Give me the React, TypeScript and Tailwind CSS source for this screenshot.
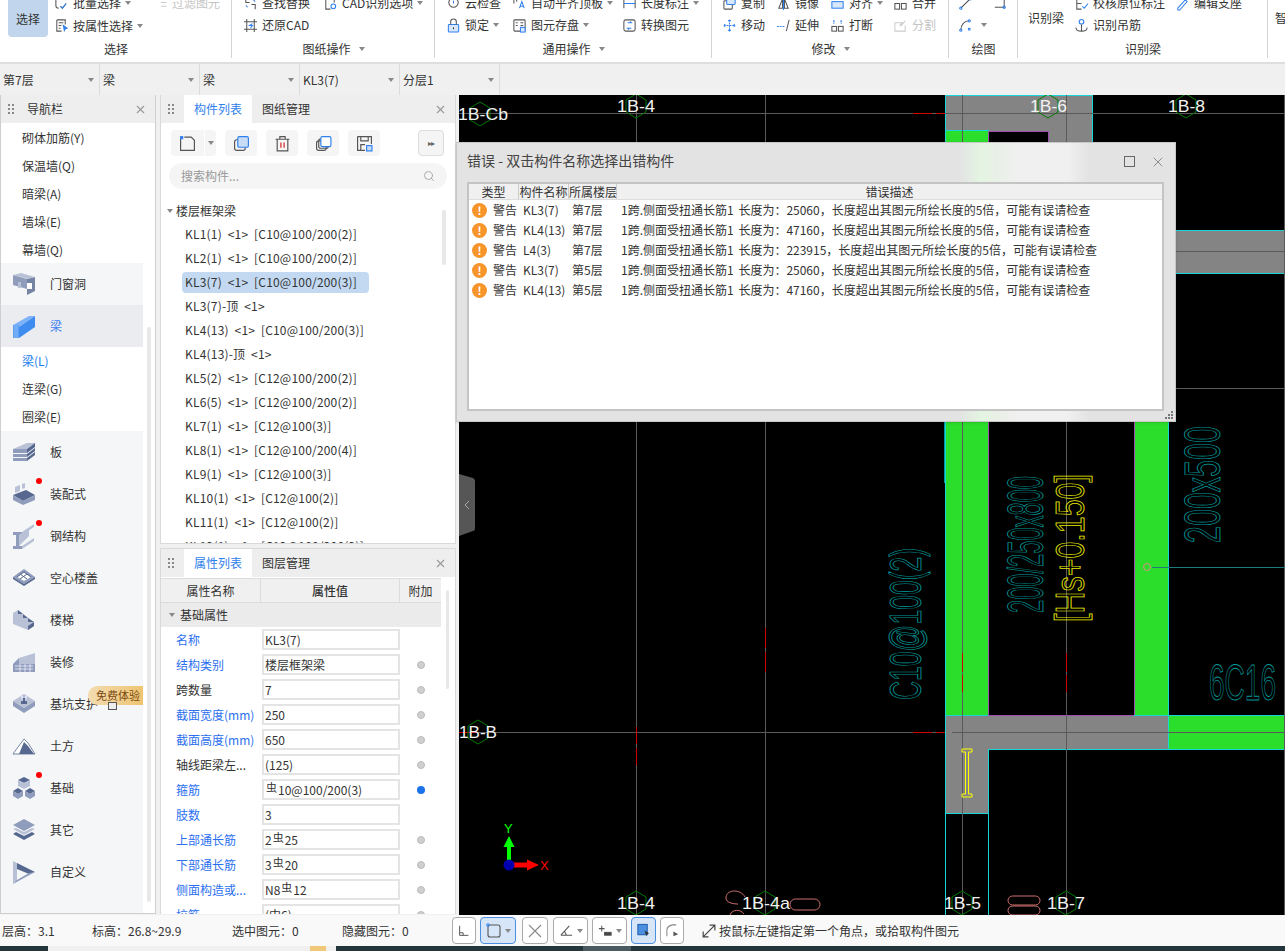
import React from "react";
import { X, Search } from "lucide-react";

/* ─── Small shared bits ───────────────────────────────── */

const Caret = ({ className = "ml-1" }: { className?: string }) => (
  <span className={`inline-block border-x-[3px] border-t-[4px] border-x-transparent border-t-[#888] ${className}`} />
);

const Grip = () => (
  <span className="grid grid-cols-2 gap-x-[2px] gap-y-[2px] w-[6px]">
    {[0, 1, 2, 3, 4, 5].map((i) => (
      <span key={i} className="w-[2px] h-[2px] bg-[#888]" />
    ))}
  </span>
);

const Svg = ({ children, size = 15 }: { children: React.ReactNode; size?: number }) => (
  <svg width={size} height={size} viewBox="0 0 16 16" fill="none" stroke="#555" strokeWidth="1.1" className="shrink-0">
    {children}
  </svg>
);

const BLUE = "#2f80ed";

/* ─── Ribbon ──────────────────────────────────────────── */

const RibbonIcons: Record<string, React.ReactNode> = {
  batch: <Svg><path d="M2 2v8a3 3 0 0 0 3 3M7 11l2 2 4-5" /><path d="M7 11l2 2 4-5" stroke={BLUE} /></Svg>,
  filter: <Svg><path d="M3 3h10M3 7h6M3 11h6" stroke="#ccc" /></Svg>,
  attr: <Svg><path d="M3 2h9v5M3 2v12h5M5 5h5M5 8h3M5 11h2" /><path d="M10 8l4 3-2 .5-1 2z" fill={BLUE} stroke={BLUE} /></Svg>,
  find: <Svg><path d="M3 2v5h4M13 14V9H9" /><path d="M5 12l-2-2M11 4l2 2" stroke={BLUE} /></Svg>,
  cadopt: <Svg><path d="M3 2v12h5M3 2h9v5" /><circle cx="11" cy="11" r="2.5" stroke={BLUE} /></Svg>,
  restore: <Svg><path d="M1 4h14M1 12h14M4 1v14M12 1v14" /><path d="M10 6L7 8h3l-2 2.5" stroke={BLUE} /></Svg>,
  check: <Svg><circle cx="8" cy="7" r="5" /><path d="M8 5v3" stroke={BLUE} /></Svg>,
  flush: <Svg><path d="M2 2v6M5 2v4" /><path d="M8 13l2.5-7 2.5 7M9 11h3" stroke={BLUE} /></Svg>,
  dim: <Svg><path d="M2 3v10M14 3v10" /><path d="M2 8h12" stroke={BLUE} /></Svg>,
  lock: <Svg><rect x="2.5" y="7" width="11" height="8" rx="1" fill="#d8e8fa" stroke={BLUE} /><path d="M5 7V4a3 3 0 0 1 6 0v3" /><path d="M8 10v2" stroke="#333" /></Svg>,
  store: <Svg><rect x="2" y="2" width="12" height="12" rx="1" /><path d="M4 5h2M9 5h3M4 8h2M9 8h3" /><rect x="9" y="10" width="5" height="5" fill="#d8e8fa" stroke={BLUE} /></Svg>,
  convert: <Svg><rect x="2" y="2" width="12" height="12" rx="2" /><path d="M6 5h4l-1.500-1.500M10 11H6l1.500 1.500" stroke={BLUE} /></Svg>,
  copy: <Svg><rect x="2" y="5" width="9" height="9" rx="1" /><rect x="5" y="2" width="9" height="7" rx="1" fill="#d8e8fa" stroke={BLUE} /></Svg>,
  mirror: <Svg><path d="M7 3L3 13h4zM9 3l4 10H9z" /><path d="M8 1v14" stroke={BLUE} /></Svg>,
  align: <Svg><rect x="2" y="6" width="12" height="7" fill="#d8e8fa" stroke={BLUE} /><path d="M2 3h12" /></Svg>,
  merge: <Svg><rect x="2" y="8" width="5" height="6" /><rect x="9" y="8" width="5" height="6" /></Svg>,
  move: <Svg><path d="M8 2v12M2 8h12M8 2L6 4M8 2l2 2M8 14l-2-2M8 14l2-2M2 8l2-2M2 8l2 2M14 8l-2-2M14 8l-2 2" stroke={BLUE} strokeDasharray="2 1" /></Svg>,
  extend: <Svg><path d="M1 9h8" stroke={BLUE} strokeDasharray="2 1" /><path d="M11 14l3-12" /></Svg>,
  breakIt: <Svg><rect x="2" y="9" width="5" height="5" /><rect x="9" y="9" width="5" height="5" /><path d="M4 2v4M12 2v4M4 4h1M11 4h1" stroke={BLUE} strokeDasharray="2 1" /></Svg>,
  split: <Svg><path d="M2 5h8l-3 3M2 5v9h11V8M13 3L8 9" stroke="#ccc" /></Svg>,
  line: <Svg><path d="M3 13L13 3" stroke="#444" /><circle cx="3" cy="13" r="1.200" stroke={BLUE} /><circle cx="13" cy="3" r="1.200" stroke={BLUE} /></Svg>,
  rect: <Svg><path d="M3 2h10v10H3" /><circle cx="13" cy="12" r="1.200" stroke={BLUE} /></Svg>,
  arc: <Svg><path d="M3 13C3 7 7 3 12 3" /><circle cx="3" cy="13" r="1.200" stroke={BLUE} /><circle cx="12" cy="3" r="1.200" stroke={BLUE} /><circle cx="12" cy="12" r="1" stroke={BLUE} /></Svg>,
  verify: <Svg><path d="M3 2h7M3 2v12h5M3 8h5" /><path d="M9 11l2 2 4-5" stroke={BLUE} /></Svg>,
  support: <Svg><path d="M3 13l8-9 2 2-8 9H3z" stroke={BLUE} /></Svg>,
  hanger: <Svg><circle cx="8" cy="4" r="2.500" stroke={BLUE} /><path d="M2 10c0 3 2 4 6 4s6-1 6-4M8 7v7" /></Svg>,
};

type RibbonItem = { icon?: string; text?: string; caret?: boolean; disabled?: boolean; narrow?: boolean };

const Item = ({ icon, text, caret, disabled, narrow }: RibbonItem) => (
  <div className={`flex items-center whitespace-nowrap text-xs h-[22px] ${disabled ? "text-[#c4c4c4]" : "text-[#333]"}`}>
    {icon && <span className={`shrink-0 ${narrow ? "w-[14px]" : "w-[19px]"}`}>{RibbonIcons[icon]}</span>}
    {text}
    {caret && <Caret />}
  </div>
);

const Group = ({
  width,
  label,
  labelCaret,
  className,
  children,
}: {
  width: string;
  label: string;
  labelCaret?: boolean;
  className?: string;
  children: React.ReactNode;
}) => (
  <div className={`relative flex flex-col shrink-0 h-[62px] ${width}`}>
    <div className="h-[38px]">
      <div className={className}>{children}</div>
    </div>
    <div className="flex items-center justify-center h-[22px] text-xs text-[#333]">
      {label}
      {labelCaret && <Caret className="ml-2" />}
    </div>
    <span className="absolute right-0 top-0 h-[58px] w-px bg-[#d4d4d4]" />
  </div>
);

const Ribbon = () => (
  <div className="flex h-[62px] shrink-0 bg-white overflow-hidden">
    <Group width="w-[232px]" label="选择">
      <div className="flex">
        <div className="ml-2 w-10 h-[37px] flex items-center justify-center rounded-b bg-[#c1d6ec] text-xs text-[#333]">选择</div>
        <div className="ml-[6px] -mt-2 grid grid-cols-[104px_70px]">
          <Item icon="batch" text="批量选择" caret />
          <Item icon="filter" text="过滤图元" disabled narrow />
          <Item icon="attr" text="按属性选择" caret />
        </div>
      </div>
    </Group>
    <Group width="w-[203px]" label="图纸操作" labelCaret className="pl-[11px] -mt-2">
      <div className="grid grid-cols-[80px_110px]">
        <Item icon="find" text="查找替换" />
        <Item icon="cadopt" text="CAD识别选项" caret />
        <Item icon="restore" text="还原CAD" />
      </div>
    </Group>
    <Group width="w-[277px]" label="通用操作" labelCaret className="pl-[11px] -mt-2">
      <div className="grid grid-cols-[66px_110px_90px]">
        <Item icon="check" text="云检查" />
        <Item icon="flush" text="自动平齐顶板" caret />
        <Item icon="dim" text="长度标注" caret />
        <Item icon="lock" text="锁定" caret />
        <Item icon="store" text="图元存盘" caret />
        <Item icon="convert" text="转换图元" />
      </div>
    </Group>
    <Group width="w-[237px]" label="修改" labelCaret className="pl-[10px] -mt-2">
      <div className="grid grid-cols-[54px_54px_63px_50px]">
        <Item icon="copy" text="复制" />
        <Item icon="mirror" text="镜像" />
        <Item icon="align" text="对齐" caret />
        <Item icon="merge" text="合并" />
        <Item icon="move" text="移动" />
        <Item icon="extend" text="延伸" />
        <Item icon="breakIt" text="打断" />
        <Item icon="split" text="分割" disabled />
      </div>
    </Group>
    <Group width="w-[69px]" label="绘图" className="pl-[9px] -mt-2">
      <div className="grid grid-cols-[34px_20px]">
        <Item icon="line" />
        <Item icon="rect" />
        <Item icon="arc" caret />
      </div>
    </Group>
    <Group width="w-[250px]" label="识别梁">
      <div className="flex">
        <div className="ml-[10px] w-[46px] h-[36px] flex items-center text-xs text-[#333]">识别梁</div>
        <div className="-mt-2 grid grid-cols-[101px_80px]">
          <Item icon="verify" text="校核原位标注" />
          <Item icon="support" text="编辑支座" />
          <Item icon="hanger" text="识别吊筋" />
        </div>
      </div>
    </Group>
    <div className="pl-[7px] pt-[10px] text-xs text-[#333]">智</div>
  </div>
);

const FILTERS = ["第7层", "梁", "梁", "KL3(7)", "分层1"];

const FilterBar = () => (
  <div className="flex h-[33px] shrink-0 bg-[#f0f0f0] border-t-2 border-[#dedede]">
    {FILTERS.map((f, i) => (
      <div key={i} className="flex items-center justify-between w-[100px] pl-[3px] pr-[5px] border-r border-[#dcdcdc] text-xs text-[#333]">
        {f}
        <Caret className="" />
      </div>
    ))}
  </div>
);

/* ─── Navigation panel ────────────────────────────────── */

const N1 = "#8f9cbb";
const N2 = "#56688f";
const N3 = "#b9c1d6";

const NavIcon = ({ name }: { name: string }) => {
  const c: Record<string, React.ReactNode> = {
    door: <><path d="M1 3l14 4v10L1 13z" fill={N1} /><path d="M15 7l8 -2v14l-8 4z" fill={N2} opacity=".8" /><path d="M1 3l8-2 14 4-8 2z" fill={N3} /><rect x="6" y="10" width="3" height="6" fill={N3} /><path d="M15 11h5v6h-5z" fill="#fff" /></>,
    beam: <><path d="M1 11l16-9v0l6 0L7 13z" fill="#7eb2f8" /><path d="M7 13L23 2v11L7 24z" fill="#3f8cf0" /><path d="M1 11h6v13H1z" fill="#5b9ef4" /><path d="M3 11v13M5 11v13" stroke="#a8ccfa" strokeWidth=".6" /></>,
    slab: <><path d="M1 9l14-6 8 0-8 6z" fill={N3} /><path d="M1 9h14v4H1zM1 14h14v3H1zM1 18h14v3H1z" fill={N1} /><path d="M15 9l8-6v4l-8 6zM15 14l8-6v3l-8 6zM15 18l8-6v3l-8 6z" fill={N2} /></>,
    prefab: <><path d="M1 13l13-5 9 5-12 6z" fill={N2} /><path d="M1 13v5l10 5v-4zM11 19v4l12-5v-5z" fill={N1} /><path d="M3 5l5-2v6l-5 2zM10 2l3-1v5l-3 1z" fill={N3} /></>,
    steel: <><path d="M1 22h9v3H1zM4 11h3v11H4zM1 8h9v3H1z" fill={N1} /><path d="M10 8L22 0v3L10 11zM7 11l10-7v8L7 22zM10 22l12-8v3l-12 8z" fill={N3} /></>,
    hollow: <><path d="M12 3l11 8-11 7L1 11z" fill={N1} /><path d="M5 11l7-5 7 5-7 4z" fill="#fff" /><path d="M8 8l7 5M12 6l7 5M8 13l7-5M5 11l7-5" stroke={N2} /><path d="M1 11v2l11 7v-2zM12 18v2l11-7v-2z" fill={N2} /></>,
    stair: <><path d="M1 5l5-3v4l5 0v4l5 0v4l6 0v4l-6 4L1 16z" fill={N3} /><path d="M6 2l5 4-5 0zM11 6l5 4h-5zM16 10l6 4h-6z" fill={N2} /><path d="M16 22l6-4v-4l-6 4z" fill={N2} /></>,
    deco: <><path d="M7 8l16-5v13H7z" fill={N3} /><path d="M1 14l6-6v6z" fill={N1} /><path d="M1 14h22l0 8H1z" fill={N1} /><path d="M3 16h18M3 19h18M8 14v8M13 14v8M18 14v8" stroke="#eef" strokeWidth=".8" /></>,
    pit: <><path d="M12 2l11 7-11 7L1 9z" fill={N3} /><path d="M1 9v5l11 7v-5zM12 16v5l11-7V9z" fill={N1} /><path d="M9 6h6v6H9z" fill={N2} /><path d="M10 4v5M14 4v5" stroke="#eef" strokeWidth="1.500" /></>,
    earth: <><path d="M1 20L9 9l3-4 4 4 7 11z" fill="#fff" stroke={N2} strokeWidth=".8" /><path d="M7 20l5-12 4 4 6 8z" fill={N2} /></>,
    base: <><path d="M12 1l6 3-6 3-6-3z" fill={N2} /><path d="M6 4v6l6 3V7zM12 7v6l6-3V4z" fill={N3} /><path d="M6 12l5 3-5 3-5-3zM18 12l5 3-5 3-5-3z" fill={N2} /><path d="M1 15v5l5 3v-5zM6 18v5l5-3v-5zM13 15v5l5 3v-5zM18 18v5l5-3v-5z" fill={N1} /></>,
    other: <><path d="M12 1l11 6-11 6L1 7z" fill={N1} /><path d="M1 11l11 6 11-6-3-1-8 4-8-4z" fill={N3} /><path d="M1 16l11 6 11-6-3-2-8 4-8-4z" fill={N2} /></>,
    custom: <><path d="M1 1l4 2v18l-4 3z" fill={N3} /><path d="M5 3l18 9-6 2L5 9z" fill={N2} /><path d="M1 24l22-12-6 1L5 20z" fill={N1} /></>,
  };
  return <svg width="24" height="25" viewBox="0 0 24 25" className="shrink-0">{c[name]}</svg>;
};

const SubRow = ({ text, active }: { text: string; active?: boolean }) => (
  <div className={`h-7 flex items-center pl-[21px] text-xs bg-white ${active ? "text-[#1a7ef0]" : "text-[#333]"}`}>{text}</div>
);

const CatRow = ({ icon, text, active, dot }: { icon: string; text: string; active?: boolean; dot?: boolean }) => (
  <div className={`relative h-[42px] flex items-center pl-[11px] text-xs ${active ? "bg-[#ebecf0] text-[#3b7ff0]" : "bg-[#f5f6f8] text-[#333]"}`}>
    <NavIcon name={icon} />
    <span className="ml-[14px]">{text}</span>
    {dot && <span className="absolute left-[35px] top-[5px] w-[6px] h-[6px] rounded-full bg-[#ff0000]" />}
  </div>
);

const PanelHeader = ({ tabs, plain }: { tabs?: string[]; plain?: string }) => (
  <div className="relative flex items-center h-7 shrink-0 bg-[#eeeeef] pl-[7px] text-xs text-[#333]">
    <Grip />
    {plain && <span className="ml-[13px]">{plain}</span>}
    {tabs && (
      <>
        <span className="ml-[10px] flex items-center justify-center w-[68px] h-7 bg-white text-[#2f80ed]">{tabs[0]}</span>
        <span className="ml-[10px]">{tabs[1]}</span>
      </>
    )}
    <X size={13} color="#999" className="absolute right-[8px] top-2" />
  </div>
);

const NavPanel = () => (
  <div className="relative w-[156px] h-[819px] shrink-0 flex flex-col border-x border-[#cfcfcf] border-b bg-white overflow-hidden">
    <PanelHeader plain="导航栏" />
    <div className="w-[142px] flex-1 bg-[#f5f6f8]">
      <div className="h-px bg-white" />
      {["砌体加筋(Y)", "保温墙(Q)", "暗梁(A)", "墙垛(E)", "幕墙(Q)"].map((t) => (
        <SubRow key={t} text={t} />
      ))}
      <div className="-mt-px" />
      <CatRow icon="door" text="门窗洞" />
      <CatRow icon="beam" text="梁" active />
      <SubRow text="梁(L)" active />
      <SubRow text="连梁(G)" />
      <SubRow text="圈梁(E)" />
      <CatRow icon="slab" text="板" />
      <CatRow icon="prefab" text="装配式" dot />
      <CatRow icon="steel" text="钢结构" dot />
      <CatRow icon="hollow" text="空心楼盖" />
      <CatRow icon="stair" text="楼梯" />
      <CatRow icon="deco" text="装修" />
      <div className="relative">
        <CatRow icon="pit" text="基坑支护" />
        <span className="absolute right-0 top-[3px] w-[55px] h-[19px] flex items-center pl-2 rounded-l-full bg-gradient-to-r from-[#f3dcb0] to-[#eec470] text-[11px] text-[#7a4a12] whitespace-nowrap overflow-hidden">免费体验</span>
        <span className="absolute left-[107px] top-[19px] w-[9px] h-[8px] border border-[#555] bg-[#eee]" />
      </div>
      <CatRow icon="earth" text="土方" />
      <CatRow icon="base" text="基础" dot />
      <CatRow icon="other" text="其它" />
      <CatRow icon="custom" text="自定义" />
    </div>
    <span className="absolute left-[146px] top-[232px] w-1 h-[575px] rounded bg-[#e8e8e8]" />
  </div>
);

/* ─── Component list panel ────────────────────────────── */

const KL = [
  "KL1(1) <1> [C10@100/200(2)]",
  "KL2(1) <1> [C10@100/200(2)]",
  "KL3(7) <1> [C10@100/200(3)]",
  "KL3(7)-顶 <1>",
  "KL4(13) <1> [C10@100/200(3)]",
  "KL4(13)-顶 <1>",
  "KL5(2) <1> [C12@100/200(2)]",
  "KL6(5) <1> [C12@100/200(2)]",
  "KL7(1) <1> [C12@100(3)]",
  "KL8(1) <1> [C12@100/200(4)]",
  "KL9(1) <1> [C12@100(3)]",
  "KL10(1) <1> [C12@100(2)]",
  "KL11(1) <1> [C12@100(2)]",
  "KL12(1) <1> [C12@100/200(2)]",
];

const ToolBtn = ({ children, className = "w-8" }: { children: React.ReactNode; className?: string }) => (
  <span className={`flex items-center justify-center h-[26px] rounded bg-[#f5f5f5] ${className}`}>{children}</span>
);

const ListPanel = () => (
  <div className="relative h-[449px] shrink-0 flex flex-col border-x border-b border-[#d9d9d9] bg-white overflow-hidden">
    <PanelHeader tabs={["构件列表", "图纸管理"]} />
    <div className="flex items-center h-[26px] shrink-0 mt-[7px] pl-[10px]">
      <ToolBtn className="w-[33px] rounded-r-none">
        <Svg size={17}><path d="M1.500 3v11.500h13V5l-3-3H5" /><path d="M1 1h3v3H1z" fill={BLUE} stroke="none" /></Svg>
      </ToolBtn>
      <ToolBtn className="w-3 border-l border-white rounded-l-none"><Caret className="" /></ToolBtn>
      <ToolBtn className="w-8 ml-[9px]">
        <Svg size={17}><rect x="1.500" y="4.500" width="10" height="10" rx="2" /><rect x="4.500" y="1.500" width="10" height="10" rx="1.500" fill="#c9dcf6" stroke={BLUE} /></Svg>
      </ToolBtn>
      <ToolBtn className="w-8 ml-[9px]">
        <Svg size={17}><path d="M1.500 4h13M5.500 4V1.500h5V4M3 4v11h10V4" /><path d="M6.500 7v5M9.500 7v5" stroke="#d02020" /></Svg>
      </ToolBtn>
      <ToolBtn className="w-8 ml-[9px]">
        <Svg size={17}><rect x="1.500" y="5.500" width="9" height="9" rx="2" /><rect x="3.500" y="3.500" width="9" height="9" rx="2" /><rect x="5.500" y="1.500" width="9.500" height="9.500" rx="1.500" fill="#fff" stroke={BLUE} /></Svg>
      </ToolBtn>
      <ToolBtn className="w-8 ml-[9px]">
        <Svg size={17}><path d="M1.500 1.500h13v7M1.500 1.500v13h7M4.500 1.500v4h7v-4M4.500 14v-5h4" /><rect x="10" y="10" width="5" height="5" fill="#c9dcf6" stroke={BLUE} /></Svg>
      </ToolBtn>
      <span className="ml-[38px] flex items-center justify-center w-[26px] h-[26px] rounded border border-[#ddd] bg-[#f5f5f5] text-[8px] text-[#666] tracking-[-1px]">▸▸</span>
    </div>
    <div className="flex items-center justify-between h-[26px] shrink-0 mx-2 mt-[7px] px-3 rounded-full bg-[#f5f5f5] text-xs text-[#999]">
      搜索构件...
      <Search size={12} color="#aaa" />
    </div>
    <div className="flex items-center h-[23px] shrink-0 mt-[10px] pl-[6px] text-xs text-[#333]">
      <Caret className="mr-[3px]" />
      楼层框架梁
    </div>
    {KL.map((k, i) => (
      <div key={k} className="h-6 shrink-0 flex items-center pl-[21px] text-xs tracking-[0.2px] text-[#333] whitespace-pre">
        <span className={`flex items-center h-[21px] pl-[3px] w-[187px] rounded-sm ${i === 2 ? "bg-[#c2d9f1]" : ""}`}>{k.replace(/ </, "  <").replace(/> /, ">  ")}</span>
      </div>
    ))}
    <span className="absolute right-[9px] top-[115px] w-1 h-[55px] rounded bg-[#e8e8e8]" />
  </div>
);

/* ─── Property panel ──────────────────────────────────── */

const Bar = () => <span className="text-[11px] leading-none -translate-y-[2px] inline-block mx-px">虫</span>;

const PROPS: { name: string; value: React.ReactNode; blue?: boolean; dot?: "gray" | "blue" }[] = [
  { name: "名称", value: "KL3(7)", blue: true },
  { name: "结构类别", value: "楼层框架梁", blue: true, dot: "gray" },
  { name: "跨数量", value: "7", dot: "gray" },
  { name: "截面宽度(mm)", value: "250", blue: true, dot: "gray" },
  { name: "截面高度(mm)", value: "650", blue: true, dot: "gray" },
  { name: "轴线距梁左...", value: "(125)", dot: "gray" },
  { name: "箍筋", value: <><Bar />10@100/200(3)</>, blue: true, dot: "blue" },
  { name: "肢数", value: "3", blue: true },
  { name: "上部通长筋", value: <>2<Bar />25</>, blue: true, dot: "gray" },
  { name: "下部通长筋", value: <>3<Bar />20</>, blue: true, dot: "gray" },
  { name: "侧面构造或...", value: <>N8<Bar />12</>, blue: true, dot: "gray" },
  { name: "拉筋", value: "(中6)", blue: true, dot: "gray" },
];

const PropPanel = () => (
  <div className="relative mt-[4px] h-[366px] flex flex-col border-x border-t border-[#d9d9d9] bg-white overflow-hidden">
    <PanelHeader tabs={["属性列表", "图层管理"]} />
    <div className="flex w-[280px] h-[25px] shrink-0 mt-px bg-[#f0f0f0] border-y border-[#dcdcdc] text-xs text-[#333]">
      <span className="w-[100px] flex items-center justify-center border-r border-[#dcdcdc]">属性名称</span>
      <span className="w-[139px] flex items-center justify-center border-r border-[#dcdcdc] font-medium">属性值</span>
      <span className="flex-1 flex items-center justify-center">附加</span>
    </div>
    <div className="flex items-center w-[280px] h-6 shrink-0 pl-2 bg-[#ebebeb] text-xs text-[#333]">
      <Caret className="mr-[5px]" />
      基础属性
    </div>
    <div>
      {PROPS.map((p) => (
        <div key={p.name} className="flex items-center h-[25px] shrink-0 text-xs">
          <span className={`w-[101px] pl-[15px] whitespace-nowrap ${p.blue ? "text-[#2b6ff0]" : "text-[#333]"}`}>{p.name}</span>
          <span className="flex items-center w-[138px] h-[21px] pl-[1px] border-2 border-[#e4e4e4] text-[#333] whitespace-nowrap">{p.value}</span>
          {p.dot && (
            <span className={`ml-[17px] w-2 h-2 rounded-full ${p.dot === "blue" ? "bg-[#1a73e8]" : "bg-[#cfcfcf] border border-[#bbb]"}`} />
          )}
        </div>
      ))}
    </div>
    <span className="absolute left-[285px] top-[41px] w-[3px] h-[99px] rounded bg-[#e8e8e8]" />
  </div>
);

/* ─── CAD canvas ──────────────────────────────────────── */

const CYAN = "#19d6d6";
const TEAL = "#009a9a";
const PURPLE = "#a050b0";
const LINE = "#5a5a5a";
const CADFONT = "Liberation Sans, sans-serif";

const AxisTag = ({ x, y, tx, text, len }: { x: number; y: number; tx: number; text: string; len: number }) => (
  <>
    <polygon
      points={`${x},${y - 12} ${x + 10},${y - 6} ${x + 10},${y + 6} ${x},${y + 12} ${x - 10},${y + 6} ${x - 10},${y - 6}`}
      fill="none"
      stroke="#007a00"
      shapeRendering="auto"
    />
    <text x={tx} y={y + 6} fill="#f2f2f2" fontSize="17" fontFamily={CADFONT} textLength={len} lengthAdjust="spacingAndGlyphs">
      {text}
    </text>
  </>
);

const CadText = ({ x, y, len, text, color, size = 50, rotate = true }: { x: number; y: number; len: number; text: string; color: string; size?: number; rotate?: boolean }) => (
  <text
    transform={`translate(${x} ${y})${rotate ? " rotate(-90)" : ""}`}
    fill="none"
    stroke={color}
    strokeWidth="0.9"
    fontSize={size}
    fontFamily={CADFONT}
    textLength={len}
    lengthAdjust="spacingAndGlyphs"
  >
    {text}
  </text>
);

const Canvas = () => (
  <svg width="826" height="820" viewBox="459 95 826 820" shapeRendering="crispEdges" className="block bg-black">
    {/* concrete and beams */}
    <rect x="945" y="95" width="147" height="60" fill="#848484" stroke={CYAN} />
    <rect x="945" y="130" width="43" height="30" fill="#2bde2b" stroke={CYAN} />
    <rect x="988" y="131" width="60" height="30" fill="#000" stroke={PURPLE} />
    <rect x="1100" y="230" width="190" height="43" fill="#848484" stroke={CYAN} />
    <rect x="945" y="400" width="43" height="315" fill="#2bde2b" />
    <rect x="1134" y="400" width="34" height="315" fill="#2bde2b" />
    <path d="M945 715H1168V749H988V813H945Z" fill="#848484" />
    <rect x="1168" y="715" width="120" height="34" fill="#2bde2b" />
    <path d="M945 400V915M988 749V915M945 813H988M988 749H1285M1168 400V749M945 715H1285" stroke={CYAN} fill="none" />
    <path d="M988 400V715M1134 400V715M988 715H1134" stroke={PURPLE} fill="none" />
    <path d="M944 421V483" stroke={TEAL} />
    {/* axis lines */}
    <path d="M459 113H1285M459 732H945M952 732H1285M1175 388H1285M1175 251H1285M636 95V915M765 95V915M962 95V915M1066 95V915M1284 95V915" stroke={LINE} />
    <path d="M1152 567H1285" stroke="#1f7a7a" />
    <circle cx="1147" cy="567" r="3.500" fill="none" stroke="#e08a8a" shapeRendering="auto" />
    <path d="M913 732H932M936 732H945M459 732H478M636 727V744M636 748V765M765 628V648M765 652V672M962 653V672M962 675V692M1066 653V672M1066 675V692M913 113H932M936 113H945" stroke="#d00000" />
    <path d="M962 749h10v3h-3.500v42h3.500v3h-10v-3h3.500v-42h-3.500z" fill="none" stroke="#ffff00" shapeRendering="auto" />

    {/* drawing text */}
    <CadText x={921} y={700} len={152} size={44} text="C10@100(2)" color={TEAL} />
    <CadText x={1043} y={613} len={137} text="200/250x800" color={TEAL} />
    <CadText x={1084} y={622} len={148} size={40} text="[Hs+0.150]" color="#e8e800" />
    <CadText x={1220} y={543} len={117} text="200x500" color={TEAL} />
    <CadText x={1209} y={700} len={67} text="6C16" color={TEAL} rotate={false} />

    {/* axis tags */}
    <AxisTag x={480} y={114} tx={458} text="1B-Cb" len={50} />
    <AxisTag x={636} y={106} tx={617} text="1B-4" len={38} />
    <AxisTag x={1048} y={106} tx={1030} text="1B-6" len={37} />
    <AxisTag x={1186} y={106} tx={1168} text="1B-8" len={37} />
    <AxisTag x={478} y={732} tx={459} text="1B-B" len={38} />
    <AxisTag x={636} y={903} tx={617} text="1B-4" len={38} />
    <AxisTag x={765} y={903} tx={742} text="1B-4a" len={48} />
    <AxisTag x={962} y={903} tx={944} text="1B-5" len={37} />
    <AxisTag x={1066} y={903} tx={1047} text="1B-7" len={38} />

    {/* pink rebar marks near the bottom */}
    <g fill="none" stroke="#d07070" shapeRendering="auto">
      <path d="M745 897c-4-8-18-8-19 0-1 6 8 7 12 7M744 914c-3-5-12-5-14 1" />
      <rect x="790" y="899" width="30" height="11" rx="5.500" />
      <rect x="1008" y="896" width="32" height="9" rx="4.500" />
      <rect x="1008" y="906" width="32" height="9" rx="4.500" />
    </g>

    {/* coordinate gizmo */}
    <g shapeRendering="auto">
      <path d="M509 865V846" stroke="#00ff00" strokeWidth="4" />
      <path d="M509 836l5.500 11h-11z" fill="#00ff00" />
      <path d="M509 865h19" stroke="#ff0000" strokeWidth="5" />
      <path d="M539 865l-12-5.500v11z" fill="#ff0000" />
      <circle cx="509" cy="865" r="5.500" fill="#0000b0" />
      <text x="504" y="833" fill="#00ff00" fontSize="13" fontFamily={CADFONT}>Y</text>
      <text x="540" y="870" fill="#ff0000" fontSize="13" fontFamily={CADFONT}>X</text>
    </g>

    {/* collapse handle */}
    <g shapeRendering="auto">
      <path d="M459 474l14 4q2 1 2 3v47q0 3-2 3l-14 5z" fill="#565656" />
      <path d="M469 501l-4 4 4 4" stroke="#aaa" fill="none" />
    </g>
  </svg>
);

/* ─── Error dialog ────────────────────────────────────── */

const ERRORS = [
  ["KL3(7)", "第7层", "25060，长度超出其图元所绘长度的5倍，可能有误请检查"],
  ["KL4(13)", "第7层", "47160，长度超出其图元所绘长度的5倍，可能有误请检查"],
  ["L4(3)", "第7层", "223915，长度超出其图元所绘长度的5倍，可能有误请检查"],
  ["KL3(7)", "第5层", "25060，长度超出其图元所绘长度的5倍，可能有误请检查"],
  ["KL4(13)", "第5层", "47160，长度超出其图元所绘长度的5倍，可能有误请检查"],
];

const ErrorDialog = () => (
  <div className="absolute left-[456px] top-[142px] w-[720px] h-[280px] flex flex-col pl-[10px] pr-[11px] border border-[#c8c8c8] shadow-sm bg-[linear-gradient(90deg,#e3e3e3_0%,#e3e3e3_70%,#e4f5e2_73%,#e8f0e6_75%,#f0f0f0_78%,#f0f0f0_85%,#e2e3e2_88%,#e2e3e2_100%)]">
    <div className="relative flex items-center h-[39px] pb-[6px] shrink-0 text-sm text-[#444]">
      错误 - 双击构件名称选择出错构件
      <span className="absolute right-[29px] top-[13px] w-[11px] h-[11px] border border-[#666]" />
      <X size={16} color="#777" strokeWidth={1.2} className="absolute right-[-2px] top-[11px]" />
    </div>
    <div className="flex-1 mb-[10px] border-2 border-[#c4c4c4] bg-white overflow-hidden">
      <div className="flex h-4 bg-[#f0f0f0] border-b border-[#ddd] text-xs leading-4 text-[#333]">
        <span className="w-[50px] text-center border-r border-[#ccc]">类型</span>
        <span className="w-[50px] text-center whitespace-nowrap border-r border-[#ccc]">构件名称</span>
        <span className="w-[48px] text-center whitespace-nowrap border-r border-[#ccc]">所属楼层</span>
        <span className="flex-1 text-center">错误描述</span>
      </div>
      {ERRORS.map((e, i) => (
        <div key={i} className="flex items-center h-5 text-xs text-[#333] whitespace-nowrap">
          <span className="ml-[3px] w-[15px] h-[15px] rounded-full bg-[#f7952b] text-white text-[11px] font-bold leading-[15px] text-center">!</span>
          <span className="ml-[6px] w-[30px]">警告</span>
          <span className="w-[49px]">{e[0]}</span>
          <span className="w-[49px]">{e[1]}</span>
          <span>1跨.侧面受扭通长筋1<span className="pl-[2px]"> </span>长度为：{e[2]}</span>
        </div>
      ))}
    </div>
    <span className="absolute right-[2px] bottom-[2px] grid grid-cols-3 gap-px w-2">
      {[0, 1, 2, 3, 4, 5, 6, 7, 8].map((i) => (
        <span key={i} className={`w-[2px] h-[2px] ${[0, 1, 3].includes(i) ? "" : "bg-[#777]"}`} />
      ))}
    </span>
  </div>
);

/* ─── Status bar ──────────────────────────────────────── */

const StatusBtn = ({ w, active, caret, children }: { w: string; active?: boolean; caret?: boolean; children: React.ReactNode }) => (
  <span className={`flex items-center justify-center gap-[3px] h-[27px] rounded-sm border ${w} ${active ? "bg-[#d6e6f8] border-[#4c8fe0]" : "bg-white border-[#aaa]"}`}>
    {children}
    {caret && <Caret className="" />}
  </span>
);

const StatusBar = () => (
  <div className="flex items-center h-[31px] shrink-0 bg-[#f9f9f9] text-xs text-[#333] whitespace-nowrap">
    <span className="w-[92px] pl-[2px]">层高：3.1</span>
    <span className="w-[140px]">标高：26.8~29.9</span>
    <span className="w-[110px]">选中图元：0</span>
    <span className="w-[110px]">隐藏图元：0</span>
    <span className="flex items-center gap-1">
      <StatusBtn w="w-6"><Svg size={14}><path d="M3 2v11h10" /><path d="M7 13v-3H3" /></Svg></StatusBtn>
      <StatusBtn w="w-9" active caret><Svg size={16}><rect x="2" y="2" width="12" height="12" rx="2" /><circle cx="2" cy="2" r="1.200" stroke={BLUE} /></Svg></StatusBtn>
      <StatusBtn w="w-[26px] ml-[2px]"><Svg size={16}><path d="M2 2l12 12M14 2L2 14" stroke="#888" /></Svg></StatusBtn>
      <StatusBtn w="w-[35px] ml-px" caret><Svg size={15}><path d="M2 13L11 3M2 13h12M6 9l2 4" /></Svg></StatusBtn>
      <StatusBtn w="w-[35px]" caret><Svg size={15}><path d="M1 6h6M4 3v6" /><rect x="7" y="10" width="7" height="3" fill="#444" /></Svg></StatusBtn>
      <StatusBtn w="w-[25px]" active><Svg size={15}><rect x="2" y="1.500" width="10" height="11" fill="#4c8fe0" stroke="#1f5fb0" /><path d="M9 8l5 3-2 1-1 2z" fill="#333" stroke="none" /></Svg></StatusBtn>
      <StatusBtn w="w-6"><Svg size={15}><path d="M2 14V8q0-5 6-6h4" stroke="#888" /><path d="M9 9l5 3-5 2z" fill="#555" stroke="none" /></Svg></StatusBtn>
    </span>
    <span className="ml-4">
      <Svg size={17}><path d="M3 14L14 3M9 3h5v5M3 9v5h5" stroke="#444" /></Svg>
    </span>
    <span className="ml-[2px]">按鼠标左键指定第一个角点，或拾取构件图元</span>
  </div>
);

const Taskbar = () => (
  <div className="flex h-[5px] shrink-0 bg-[#22363c]">
    <span className="ml-12 w-[262px] bg-[#f0f0f0]" />
    <span className="w-[16px] bg-[#f0c878]" />
    <span className="w-[10px] bg-[#f0f0f0]" />
    <span className="ml-[247px] w-12 bg-[#4a5a60]" />
  </div>
);

/* ─── Page ────────────────────────────────────────────── */

export default function App() {
  return (
    <div className="relative flex flex-col w-[1285px] h-[951px] overflow-hidden bg-[#f0f0f0] [font-family:'Noto_Sans_CJK_SC','Liberation_Sans',sans-serif]">
      <Ribbon />
      <FilterBar />
      <div className="flex h-[820px] shrink-0">
        <NavPanel />
        <div className="ml-1 w-[296px] shrink-0 flex flex-col">
          <ListPanel />
          <PropPanel />
        </div>
        <div className="ml-[3px]">
          <Canvas />
        </div>
      </div>
      <StatusBar />
      <Taskbar />
      <ErrorDialog />
    </div>
  );
}
